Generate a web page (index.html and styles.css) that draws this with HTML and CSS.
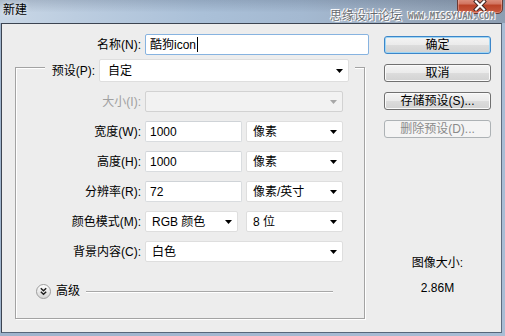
FILE: index.html
```html
<!DOCTYPE html>
<html lang="zh-CN">
<head>
    <meta charset="utf-8">
    <title>新建</title>
    <link rel="stylesheet" href="styles.css">
</head>
<body>

    <div class="window">
        <div class="titlebar">
            <span class="title">新建</span>
            <div class="watermark">
                <span class="wm-cn">思缘设计论坛</span>
                <span class="wm-en">WWW.MISSYUAN.COM</span>
            </div>
            <div class="close-btn">
                <svg width="14" height="11" viewBox="0 0 14 11">
                    <path d="M3 1.5 L11 9.5 M11 1.5 L3 9.5" stroke="#3a2320" stroke-width="4" stroke-linecap="square"/>
                    <path d="M3 1.5 L11 9.5 M11 1.5 L3 9.5" stroke="#fff" stroke-width="2.2" stroke-linecap="square"/>
                </svg>
            </div>
        </div>

        <div class="client">
            <div class="form-col">
                <div class="row name-row">
                    <label class="lbl name-lbl">名称(N):</label>
                    <div class="field input focused w-name">酷狗icon<span class="caret"></span></div>
                </div>

                <div class="group">
                    <div class="group-head">
                        <label class="head-lbl">预设(P):</label>
                        <div class="field select w-preset"><span>自定</span><svg class="arrow" width="7" height="4"><polygon points="0,0 7,0 3.5,4" fill="#000"/></svg></div>
                    </div>

                    <div class="row">
                        <label class="lbl disabled">大小(I):</label>
                        <div class="field select off w-full"><span></span><svg class="arrow" width="7" height="4"><polygon points="0,0 7,0 3.5,4" fill="#a8a8a8"/></svg></div>
                    </div>

                    <div class="row">
                        <label class="lbl">宽度(W):</label>
                        <div class="field input w-half">1000</div>
                        <div class="field select w-half gap-s"><span>像素</span><svg class="arrow" width="7" height="4"><polygon points="0,0 7,0 3.5,4" fill="#000"/></svg></div>
                    </div>

                    <div class="row">
                        <label class="lbl">高度(H):</label>
                        <div class="field input w-half">1000</div>
                        <div class="field select w-half gap-s"><span>像素</span><svg class="arrow" width="7" height="4"><polygon points="0,0 7,0 3.5,4" fill="#000"/></svg></div>
                    </div>

                    <div class="row">
                        <label class="lbl">分辨率(R):</label>
                        <div class="field input w-half">72</div>
                        <div class="field select w-half gap-s"><span>像素/英寸</span><svg class="arrow" width="7" height="4"><polygon points="0,0 7,0 3.5,4" fill="#000"/></svg></div>
                    </div>

                    <div class="row">
                        <label class="lbl">颜色模式(M):</label>
                        <div class="field select w-mode"><span>RGB 颜色</span><svg class="arrow" width="7" height="4"><polygon points="0,0 7,0 3.5,4" fill="#000"/></svg></div>
                        <div class="field select w-half gap-l"><span>8 位</span><svg class="arrow" width="7" height="4"><polygon points="0,0 7,0 3.5,4" fill="#000"/></svg></div>
                    </div>

                    <div class="row">
                        <label class="lbl">背景内容(C):</label>
                        <div class="field select w-full"><span>白色</span><svg class="arrow" width="7" height="4"><polygon points="0,0 7,0 3.5,4" fill="#000"/></svg></div>
                    </div>

                    <div class="advanced">
                        <svg class="adv-icon" width="15" height="15" viewBox="0 0 15 15">
                            <defs>
                                <linearGradient id="advg" x1="0" y1="0" x2="0" y2="1">
                                    <stop offset="0" stop-color="#ffffff"/>
                                    <stop offset="1" stop-color="#d4d4d4"/>
                                </linearGradient>
                            </defs>
                            <circle cx="7.5" cy="7.5" r="7" fill="url(#advg)" stroke="#9c9c9c"/>
                            <path d="M4.8 4.3 L7.5 6.8 L10.2 4.3 M4.8 7.8 L7.5 10.3 L10.2 7.8" fill="none" stroke="#1c1c1c" stroke-width="1.4"/>
                        </svg>
                        <span class="adv-text">高级</span>
                        <span class="adv-line"></span>
                    </div>
                </div>
            </div>

            <div class="btn-col">
                <button type="button" class="btn btn-default">确定</button>
                <button type="button" class="btn">取消</button>
                <button type="button" class="btn">存储预设(S)...</button>
                <button type="button" class="btn" disabled>删除预设(D)...</button>

                <div class="img-size">
                    <div>图像大小:</div>
                    <div class="img-size-val">2.86M</div>
                </div>
            </div>
        </div>
    </div>

</body>
</html>
```

FILE: styles.css
```css
body {
    margin: 0;
    font-family: "Liberation Sans", "Noto Sans CJK SC", sans-serif;
    font-size: 12px;
    color: #000;
}

.window {
    position: relative;
    width: 505px;
    height: 336px;
    overflow: hidden;
    background: linear-gradient(to right, #9fb4cd, #a9bdd5);
}

.titlebar {
    position: relative;
    height: 23px;
    background:
        linear-gradient(to bottom, rgba(40, 55, 80, 0.18), rgba(255, 255, 255, 0) 55%),
        linear-gradient(to right, #c9d7e6 0%, #bccde0 15%, #aac0d8 40%, #a4b9d1 60%, #9aabbf 80%, #8d9eb2 100%);
}

.title {
    display: block;
    padding: 3px 0 0 3px;
    line-height: 14px;
    text-shadow: 0 0 5px rgba(255, 255, 255, 0.9);
}

.watermark {
    position: absolute;
    left: 330px;
    top: 8px;
    z-index: 2;
    display: flex;
    align-items: flex-end;
    color: #676b70;
    text-shadow: 0 0 1px #fff, 0 0 2px #fff, 1px 1px 0 #fff, -1px -1px 0 #fff;
}

.wm-cn {
    font-family: "Noto Sans CJK SC", sans-serif;
    font-size: 12px;
    line-height: 14px;
}

.wm-en {
    margin-left: 6px;
    font-family: "DejaVu Sans Mono", monospace;
    font-size: 9px;
    font-weight: bold;
    line-height: 12px;
    color: #7a7e84;
}

.close-btn {
    position: absolute;
    right: 2px;
    top: -5px;
    width: 46px;
    height: 19px;
    display: flex;
    align-items: flex-end;
    justify-content: center;
    padding-bottom: 2px;
    box-sizing: border-box;
    border: 1px solid #6b3a33;
    border-radius: 0 0 5px 5px;
    background: linear-gradient(to bottom, #e6a898 0%, #d27561 45%, #bb4328 55%, #c85a40 100%);
    box-shadow: inset 0 0 0 1px rgba(255, 200, 190, 0.4);
}

.client {
    display: flex;
    width: 499px;
    height: 308px;
    margin-left: 1px;
    border: 1px solid #3c4451;
    border-right-color: #5e6d80;
    border-bottom-color: #56667a;
    background: #ededed;
}

.form-col {
    width: 369px;
    padding-left: 13px;
    display: flex;
    flex-direction: column;
}

.row {
    display: flex;
    align-items: center;
    height: 21px;
    margin-top: 9px;
}

.name-row {
    margin-top: 10px;
}

.lbl {
    width: 125px;
    margin-right: 4px;
    text-align: right;
    white-space: nowrap;
    line-height: 14px;
}

.name-lbl {
    width: 126px;
}

.lbl.disabled {
    color: #a0a0a0;
}

.field {
    height: 21px;
    box-sizing: border-box;
    display: flex;
    align-items: center;
    background: #fff;
    border: 1px solid #d9dcdf;
    border-radius: 2px;
    line-height: 14px;
    white-space: nowrap;
}

.input {
    padding-left: 4px;
    border-top-color: #cfd3d7;
}

.focused {
    border-color: #87b3e0;
}

.caret {
    display: inline-block;
    width: 1px;
    height: 15px;
    margin-left: 1px;
    background: #000;
}

.select {
    padding: 0 5px 0 6px;
    border-color: #dedede;
}

.select .arrow {
    margin-left: auto;
    flex: none;
}

.select.off {
    background: #f2f2f2;
    border-color: #d2d2d2;
}

.w-name { width: 224px; }
.w-preset { width: 250px; height: 23px; padding-left: 8px; }
.w-full { width: 198px; }
.w-half { width: 97px; }
.w-mode { width: 93px; }
.gap-s { margin-left: 4px; }
.gap-l { margin-left: 8px; }

.group {
    width: 350px;
    margin-top: 12px;
    padding-bottom: 19px;
    box-sizing: border-box;
    display: flex;
    flex-direction: column;
    border: 1px solid #a3a3a3;
    box-shadow: inset 1px 1px 0 #fff, 1px 1px 0 #fff;
}

.group-head {
    align-self: flex-start;
    display: flex;
    align-items: center;
    height: 23px;
    margin: -9px 0 0 29px;
    padding: 0 6px 0 3px;
    background: #ededed;
}

.head-lbl {
    width: 51px;
    padding-right: 4px;
    box-sizing: border-box;
    text-align: right;
    white-space: nowrap;
    line-height: 14px;
}

.advanced {
    display: flex;
    align-items: center;
    height: 16px;
    margin-top: 21px;
    padding-left: 20px;
}

.adv-text {
    margin-left: 5px;
    line-height: 14px;
}

.adv-line {
    flex: 1;
    height: 1px;
    margin: 0 31px 0 6px;
    background: #a8a8a8;
    box-shadow: 0 1px 0 #fff;
}

.btn-col {
    width: 107px;
    padding-top: 12px;
    display: flex;
    flex-direction: column;
    gap: 10px;
}

.btn {
    height: 18px;
    padding: 0;
    font-family: inherit;
    font-size: 12px;
    line-height: 14px;
    color: #000;
    border: 1px solid #707070;
    border-radius: 3px;
    background: linear-gradient(to bottom, #f4f4f4 0%, #ebebeb 48%, #dcdcdc 52%, #d2d2d2 100%);
    box-shadow: inset 0 0 0 1px #fbfbfb;
}

.btn-default {
    border-color: #3c86c9;
    box-shadow: inset 0 0 0 1px #9fd6f5;
}

.btn:disabled {
    color: #8a8a8a;
    border-color: #adb2b5;
    background: #f4f4f4;
    box-shadow: none;
}

.img-size {
    margin-top: 108px;
    text-align: center;
    line-height: 14px;
}

.img-size-val {
    margin-top: 11px;
}
```
